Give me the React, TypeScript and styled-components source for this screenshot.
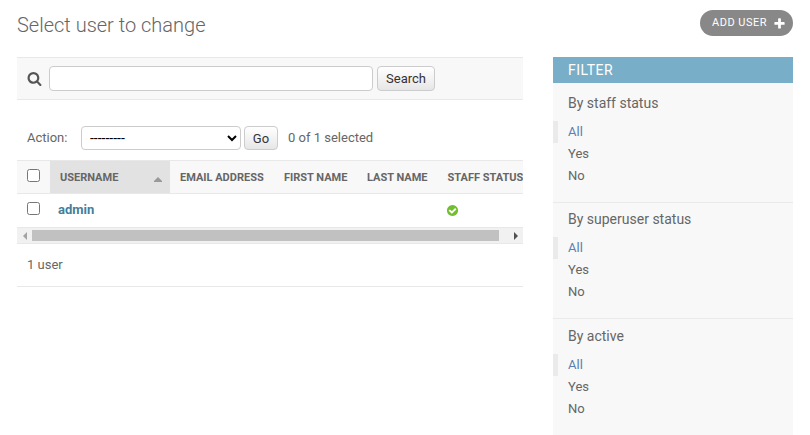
import React from "react";
import styled, { createGlobalStyle } from "styled-components";

const Global = createGlobalStyle`
  *, *::before, *::after { box-sizing: border-box; }
  html, body { margin: 0; padding: 0; height: 435px; overflow: hidden; background: #fff; }
  body { font-family: Roboto, "Liberation Sans", sans-serif; font-size: 13px; color: #666; }
`;

const Page = styled.div`
  width: 810px;
  height: 435px;
  padding: 10px 17px 0;
  overflow: hidden;
`;

const TopBar = styled.header`
  display: flex;
  justify-content: space-between;
  height: 47px;
`;

const Title = styled.h1`
  margin: 0;
  padding-top: 2px;
  font-size: 20px;
  line-height: 26px;
  font-weight: 300;
  color: #666;
`;

const AddLink = styled.a`
  display: flex;
  align-items: center;
  gap: 6px;
  width: 93px;
  height: 26px;
  padding: 0 7px 2px 12px;
  border-radius: 15px;
  background: #888;
  color: #fff;
  font-size: 11px;
  line-height: 13px;
  letter-spacing: 0.5px;
  text-transform: uppercase;
  white-space: nowrap;
  svg { flex: none; position: relative; top: 1px; }
`;

const Columns = styled.div`
  display: grid;
  grid-template-columns: 506px 240px;
  column-gap: 30px;
  align-items: start;
`;

const Changelist = styled.main`
  display: flex;
  flex-direction: column;
  min-width: 0;
`;

const SearchBar = styled.form`
  display: flex;
  align-items: center;
  height: 43px;
  padding-left: 10px;
  border-top: 1px solid #e8e8e8;
  border-bottom: 1px solid #e8e8e8;
  background: #f8f8f8;
`;

const SearchInput = styled.input`
  width: 324px;
  height: 25px;
  margin: 0 4px 0 7px;
  padding: 2px 5px;
  border: 1px solid #ccc;
  border-radius: 4px;
  background: #fff;
  font: inherit;
`;

const GradientButton = styled.button<{ $width: number; $height: number }>`
  width: ${(p) => p.$width}px;
  height: ${(p) => p.$height}px;
  padding: 0;
  border: 1px solid #ccc;
  border-radius: 4px;
  background: linear-gradient(#fff, #eee 70%, #e6e6e6);
  color: #333;
  font: 13px/15px Roboto, "Liberation Sans", sans-serif;
`;

const Actions = styled.div`
  display: flex;
  align-items: center;
  height: 60px;
  padding: 16px 10px 0;
`;

const ActionLabel = styled.label`
  width: 54px;
  line-height: 20px;
`;

const ActionSelect = styled.select`
  width: 160px;
  height: 24px;
  margin: 0 3px 0 0;
  padding: 0 4px;
  border: 1px solid #ccc;
  border-radius: 4px;
  background: #fff;
  color: #000;
  font: 14px Roboto, "Liberation Sans", sans-serif;
`;

const Counter = styled.span`
  margin-left: 10px;
  line-height: 20px;
`;

const TableRow = styled.div<{ $head?: boolean }>`
  display: grid;
  grid-template-columns: 33px 120px 104px 83px 80.5px 85.5px;
  height: ${(p) => (p.$head ? 34 : 33)}px;
  overflow: hidden;
  border-top: ${(p) => (p.$head ? "1px solid #e8e8e8" : "none")};
  border-bottom: ${(p) => (p.$head ? "1px solid #e8e8e8" : "none")};
  background: ${(p) => (p.$head ? "#f8f8f8" : "#fff")};
`;

const HeadCell = styled.div<{ $sorted?: boolean }>`
  display: flex;
  justify-content: space-between;
  align-items: center;
  padding: 0 8px 0 10px;
  background: ${(p) => (p.$sorted ? "#e2e2e2" : "transparent")};
  font-size: 11px;
  font-weight: 700;
  text-transform: uppercase;
  white-space: nowrap;
  svg { margin-top: 5px; }
`;

const Cell = styled.div<{ $left?: number }>`
  display: flex;
  align-items: center;
  padding: 0 0 1px ${(p) => p.$left ?? 10}px;
`;

const Check = styled.input`
  width: 13px;
  height: 13px;
  margin: 0 0 3px;
`;

const UserLink = styled.a`
  color: #447e9b;
  font-weight: 700;
  line-height: 16px;
`;

const ScrollTrack = styled.div`
  display: flex;
  align-items: center;
  height: 17px;
  border-top: 1px solid #e8e8e8;
  border-bottom: 1px solid #e8e8e8;
  background: #f1f1f1;
`;

const ScrollArrow = styled.span`
  display: flex;
  width: 15px;
  justify-content: center;
`;

const ScrollThumb = styled.div`
  width: 467px;
  height: 11px;
  margin-right: 9px;
  background: #c1c1c1;
`;

const Paginator = styled.p`
  height: 43px;
  margin: 0;
  padding: 0 10px;
  border-bottom: 1px solid #e8e8e8;
  line-height: 42px;
`;

const FilterPanel = styled.aside`
  height: 378px;
  background: #f8f8f8;
`;

const FilterTitle = styled.h2`
  height: 26px;
  margin: 0;
  padding: 0 15px;
  background: #79aec8;
  color: #fff;
  font-size: 14px;
  line-height: 26px;
  font-weight: 400;
  letter-spacing: 0.5px;
  text-transform: uppercase;
`;

const FilterGroup = styled.section<{ $height: number }>`
  height: ${(p) => p.$height}px;
  border-bottom: 1px solid #eaeaea;
  &:last-child { border-bottom: 0; }
`;

const FilterHeading = styled.h3<{ $gap: number }>`
  height: ${(p) => p.$gap}px;
  margin: 0;
  padding: ${(p) => p.$gap - 28}px 15px 0;
  font-size: 14px;
  line-height: 20px;
  font-weight: 400;
`;

const Choices = styled.ul`
  margin: 0;
  padding: 0;
  list-style: none;
`;

const Choice = styled.li<{ $selected: boolean }>`
  height: 22px;
  padding-left: ${(p) => (p.$selected ? 10 : 15)}px;
  border-left: ${(p) => (p.$selected ? "5px solid #eaeaea" : "none")};
  color: ${(p) => (p.$selected ? "#5b80b2" : "#666")};
  line-height: 21px;
`;

const SearchIcon = () => (
  <svg width="15" height="15" viewBox="0 0 1792 1792" fill="#555">
    <path d="M1216 832q0-185-131.5-316.5t-316.5-131.5-316.5 131.5-131.5 316.5 131.5 316.5 316.5 131.5 316.5-131.5 131.5-316.5zm512 832q0 52-38 90t-90 38q-54 0-90-38l-343-342q-179 124-399 124-143 0-273.5-55.5t-225-150-150-225-55.5-273.5 55.5-273.5 150-225 225-150 273.5-55.5 273.5 55.5 225 150 150 225 55.5 273.5q0 220-124 399l343 343q37 37 37 90z" />
  </svg>
);

const PlusIcon = () => (
  <svg width="13" height="13" viewBox="0 0 1792 1792" fill="#fff">
    <path d="M1600 796v192q0 40-28 68t-68 28h-416v416q0 40-28 68t-68 28h-192q-40 0-68-28t-28-68v-416h-416q-40 0-68-28t-28-68v-192q0-40 28-68t68-28h416v-416q0-40 28-68t68-28h192q40 0 68 28t28 68v416h416q40 0 68 28t28 68z" />
  </svg>
);

const YesIcon = () => (
  <svg width="13" height="13" viewBox="0 0 1792 1792" fill="#70bf2b">
    <path d="M1412 734q0-28-18-46l-91-90q-19-19-45-19t-45 19l-408 407-226-226q-19-19-45-19t-45 19l-91 90q-18 18-18 46 0 27 18 45l362 362q19 19 45 19 27 0 46-19l543-543q18-18 18-45zm252 162q0 209-103 385.5t-279.5 279.5-385.5 103-385.5-103-279.5-279.5-103-385.5 103-385.5 279.5-279.5 385.5-103 385.5 103 279.5 279.5 103 385.5z" />
  </svg>
);

const SortIcon = () => (
  <svg width="8" height="5" viewBox="0 0 8 5" fill="#999">
    <path d="M4 0L8 4V5H0V4z" />
  </svg>
);

const filters = [
  { name: "By staff status", height: 120, heading: 38 },
  { name: "By superuser status", height: 116, heading: 34 },
  { name: "By active", height: 116, heading: 35 },
];

const headings = ["Email address", "First name", "Last name", "Staff status"];

export default function App() {
  return (
    <>
      <Global />
      <Page>
        <TopBar>
          <Title>Select user to change</Title>
          <AddLink>
            Add user
            <PlusIcon />
          </AddLink>
        </TopBar>
        <Columns>
          <Changelist>
            <SearchBar>
              <SearchIcon />
              <SearchInput type="text" aria-label="Search" />
              <GradientButton type="button" $width={58} $height={25}>Search</GradientButton>
            </SearchBar>
            <Actions>
              <ActionLabel htmlFor="action">Action:</ActionLabel>
              <ActionSelect id="action">
                <option>---------</option>
              </ActionSelect>
              <GradientButton type="button" $width={34} $height={24}>Go</GradientButton>
              <Counter>0 of 1 selected</Counter>
            </Actions>
            <TableRow $head>
              <Cell><Check type="checkbox" /></Cell>
              <HeadCell $sorted>
                Username
                <SortIcon />
              </HeadCell>
              {headings.map((h) => (
                <HeadCell key={h}>{h}</HeadCell>
              ))}
            </TableRow>
            <TableRow>
              <Cell><Check type="checkbox" /></Cell>
              <Cell $left={8}><UserLink>admin</UserLink></Cell>
              <Cell />
              <Cell />
              <Cell />
              <Cell $left={8.5}><YesIcon /></Cell>
            </TableRow>
            <ScrollTrack>
              <ScrollArrow>
                <svg width="4" height="8" viewBox="0 0 4 8" fill="#a3a3a3"><path d="M4 0v8L0 4z" /></svg>
              </ScrollArrow>
              <ScrollThumb />
              <ScrollArrow>
                <svg width="4" height="8" viewBox="0 0 4 8" fill="#505050"><path d="M0 0v8l4-4z" /></svg>
              </ScrollArrow>
            </ScrollTrack>
            <Paginator>1 user</Paginator>
          </Changelist>
          <FilterPanel>
            <FilterTitle>Filter</FilterTitle>
            {filters.map((f) => (
              <FilterGroup key={f.name} $height={f.height}>
                <FilterHeading $gap={f.heading}>{f.name}</FilterHeading>
                <Choices>
                  {["All", "Yes", "No"].map((c) => (
                    <Choice key={c} $selected={c === "All"}>{c}</Choice>
                  ))}
                </Choices>
              </FilterGroup>
            ))}
          </FilterPanel>
        </Columns>
      </Page>
    </>
  );
}
